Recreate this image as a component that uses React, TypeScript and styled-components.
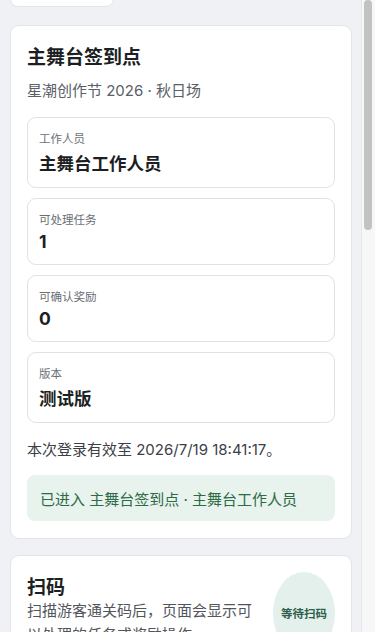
import styled, { createGlobalStyle } from "styled-components";

const GlobalStyle = createGlobalStyle`
  html, body {
    margin: 0;
    padding: 0;
    height: 100%;
  }
  body {
    font-family: Inter, "Noto Sans CJK SC", sans-serif;
    background: #eff1f4;
    color: #1c1f23;
    overflow: hidden;
  }
  * {
    box-sizing: border-box;
  }
`;

const Shell = styled.div`
  display: flex;
  height: 100vh;
  overflow: hidden;
  background: #eff1f4;
`;

const Viewport = styled.div`
  flex: 1;
  min-width: 0;
  overflow: hidden;
`;

// the window scrollbar, drawn since the page is shown without one
const ScrollTrack = styled.div`
  flex: none;
  width: 14px;
  padding: 0 3px 0 2px;
  background: #f7f7f7;
  border-left: 1px solid #e7e7e7;
`;

const ScrollThumb = styled.div`
  height: 230px;
  border-radius: 4px;
  background: #c2c2c2;
`;

const Page = styled.div`
  display: flex;
  flex-direction: column;
  padding: 0 9px 40px 10px;
`;

const BackPill = styled.button`
  width: 104px;
  height: 37px;
  margin-top: -30px;
  margin-bottom: 18px;
  border: 1px solid #e2e5e9;
  border-radius: 8px;
  background: #fff;
  font: inherit;
  font-size: 14px;
  color: #3a3f45;
`;

const Stack = styled.div`
  display: flex;
  flex-direction: column;
  gap: 16px;
`;

const Card = styled.section`
  display: flex;
  flex-direction: column;
  background: #fff;
  border: 1px solid #e2e5e9;
  border-radius: 9px;
  padding: 16px 16px 17px;
`;

const Title = styled.h2`
  margin: 0;
  font-size: 19px;
  font-weight: 700;
  line-height: normal;
  color: #1c1f23;
`;

const Subtitle = styled.p`
  margin: 10px 0 17px;
  font-size: 15px;
  line-height: normal;
  color: #5b6068;
`;

const StatList = styled.div`
  display: flex;
  flex-direction: column;
  gap: 10px;
`;

const StatBox = styled.div`
  display: flex;
  flex-direction: column;
  gap: 4px;
  border: 1px solid #dfe2e6;
  border-radius: 9px;
  padding: 12px 11px;
`;

const StatLabel = styled.span`
  font-size: 11.5px;
  line-height: normal;
  color: #6a6f76;
`;

const StatValue = styled.span`
  font-size: 17.5px;
  font-weight: 700;
  line-height: normal;
  color: #1c1f23;
`;

const Note = styled.p`
  margin: 15px 0 16px;
  font-size: 15px;
  line-height: normal;
  color: #3b4047;
`;

const Banner = styled.div`
  padding: 12.5px 13px;
  border-radius: 8px;
  background: #e7f3ec;
  color: #2d6a47;
  font-size: 15px;
  line-height: normal;
`;

const HeadRow = styled.div`
  display: flex;
  align-items: flex-start;
  gap: 10px;
`;

const HeadText = styled.div`
  flex: 1;
  min-width: 0;
`;

const Desc = styled.p`
  margin: 0;
  font-size: 15px;
  line-height: 24px;
  color: #51565d;
`;

const StatusBadge = styled.div`
  flex: none;
  width: 62px;
  height: 82px;
  border-radius: 50%;
  background: #e3f0ec;
  color: #2f5f4b;
  font-size: 11.5px;
  font-weight: 700;
  display: flex;
  align-items: center;
  justify-content: center;
`;

const ScanArea = styled.div`
  margin-top: 16px;
  height: 220px;
  border: 1px dashed #cfd4da;
  border-radius: 10px;
  background: #f6f7f9;
  display: flex;
  align-items: center;
  justify-content: center;
  color: #80868d;
  font-size: 14px;
`;

const PrimaryButton = styled.button`
  margin-top: 14px;
  height: 44px;
  border: none;
  border-radius: 8px;
  background: #2d6a47;
  color: #fff;
  font: inherit;
  font-size: 15px;
  font-weight: 600;
`;

const TaskRow = styled.div`
  display: flex;
  justify-content: space-between;
  align-items: center;
  padding: 12px 0;
  border-bottom: 1px solid #eceef1;
  font-size: 15px;
  color: #3b4047;
  &:last-child {
    border-bottom: none;
  }
`;

const stats = [
  { label: "工作人员", value: "主舞台工作人员" },
  { label: "可处理任务", value: "1" },
  { label: "可确认奖励", value: "0" },
  { label: "版本", value: "测试版" },
];

export default function App() {
  return (
    <>
      <GlobalStyle />
      <Shell>
        <Viewport>
          <Page>
            <BackPill>返回活动列表</BackPill>
            <Stack>
              <Card>
                <Title>主舞台签到点</Title>
                <Subtitle>星潮创作节 2026 · 秋日场</Subtitle>
                <StatList>
                  {stats.map((s) => (
                    <StatBox key={s.label}>
                      <StatLabel>{s.label}</StatLabel>
                      <StatValue>{s.value}</StatValue>
                    </StatBox>
                  ))}
                </StatList>
                <Note>本次登录有效至 2026/7/19 18:41:17。</Note>
                <Banner>已进入 主舞台签到点 · 主舞台工作人员</Banner>
              </Card>

              <Card>
                <HeadRow>
                  <HeadText>
                    <Title>扫码</Title>
                    <Desc>扫描游客通关码后，页面会显示可以处理的任务或奖励操作。</Desc>
                  </HeadText>
                  <StatusBadge>等待扫码</StatusBadge>
                </HeadRow>
                <ScanArea>将通关码对准取景框</ScanArea>
                <PrimaryButton>开始扫码</PrimaryButton>
              </Card>

              <Card>
                <Title>可处理任务</Title>
                <Subtitle>扫码后显示该游客在本点位的任务。</Subtitle>
                <TaskRow>
                  <span>主舞台签到</span>
                  <span>待完成</span>
                </TaskRow>
              </Card>
            </Stack>
          </Page>
        </Viewport>
        <ScrollTrack>
          <ScrollThumb />
        </ScrollTrack>
      </Shell>
    </>
  );
}
